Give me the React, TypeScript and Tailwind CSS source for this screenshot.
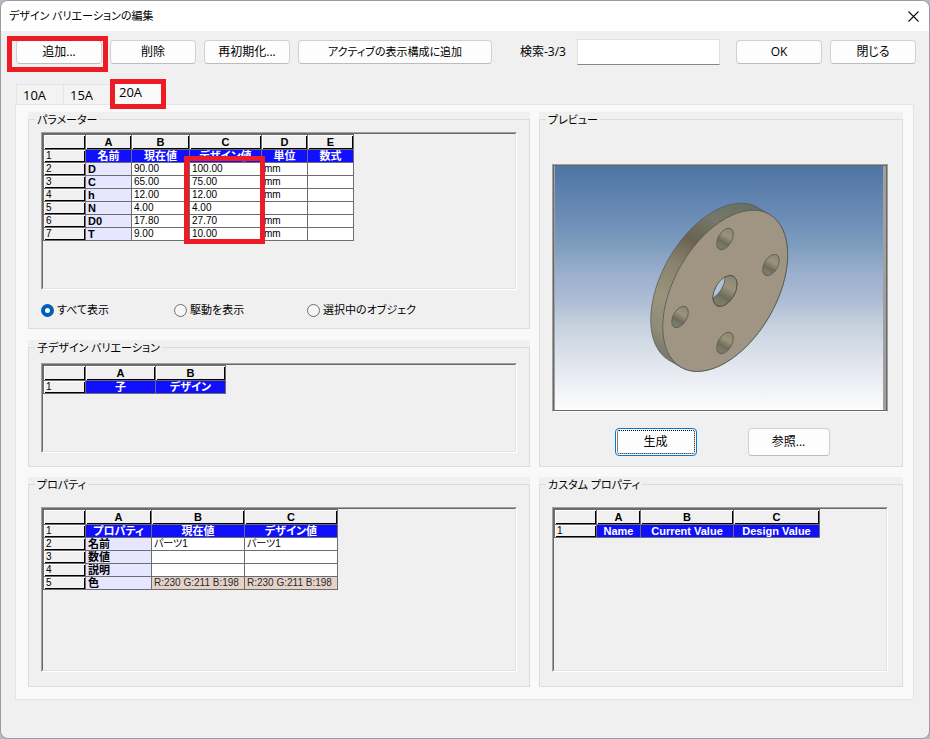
import React, { useState } from 'react'
import clsx from 'clsx'

type CellKind = 'title' | 'name' | 'value' | 'color'

interface SheetProps {
  label: string
  columns: string[]
  titles: string[]
  rows?: string[][]
  valueKinds?: CellKind[]
}

interface GroupProps {
  title: string
  className?: string
  children: React.ReactNode
}

interface PushButtonProps {
  children: React.ReactNode
  className?: string
  isDefault?: boolean
}

const TABS = ['10A', '15A', '20A']

const FILTERS = ['すべて表示', '駆動を表示', '選択中のオブジェク']

const PARAMETERS = [
  ['D', '90.00', '100.00', 'mm', ''],
  ['C', '65.00', '75.00', 'mm', ''],
  ['h', '12.00', '12.00', 'mm', ''],
  ['N', '4.00', '4.00', '', ''],
  ['D0', '17.80', '27.70', 'mm', ''],
  ['T', '9.00', '10.00', 'mm', ''],
]

const PROPERTIES = [
  ['名前', 'パーツ1', 'パーツ1'],
  ['数値', '', ''],
  ['説明', '', ''],
  ['色', 'R:230 G:211 B:198', 'R:230 G:211 B:198'],
]

const BOLT_HOLES = [
  [170, 73],
  [216, 99],
  [125, 151],
  [170, 177],
]

const HEAD_CELL =
  'h-[15px] border-r border-b border-[#6d6d6d] bg-[#f0f0f0] p-0 text-center text-[11px] leading-3 font-bold shadow-[inset_1px_1px_0_#fff,inset_-1px_-1px_0_#000]'
const ROW_HEAD =
  'h-[13px] border-r border-b border-[#6d6d6d] bg-[#f0f0f0] p-0 pl-[2px] text-left text-[10px] leading-3 font-normal shadow-[inset_1px_1px_0_#fff,inset_-1px_-1px_0_#000]'
const CELL = 'h-[13px] overflow-hidden border-r border-b border-[#6d6d6d] p-0 leading-3 whitespace-nowrap'

const PushButton: React.FC<PushButtonProps> = ({ children, className, isDefault = false }) => (
  <button
    type="button"
    className={clsx(
      'shrink-0 rounded border bg-[#fdfdfd] text-center leading-4 whitespace-nowrap',
      isDefault
        ? 'border-[#0078d4] outline-1 -outline-offset-3 outline-black outline-dotted'
        : 'border-[#d0d0d0] border-b-[#bcbcbc]',
      className
    )}
  >
    {children}
  </button>
)

const Group: React.FC<GroupProps> = ({ title, className, children }) => (
  <div className="flex flex-col bg-[#f0f0f0]">
    <fieldset className={clsx('min-w-0 flex-1 border border-[#dcdcdc] pl-3', className)}>
      <legend className="ml-[-6px] h-[15px] px-[2px] text-[11px] leading-[15px]">{title}</legend>
      {children}
    </fieldset>
  </div>
)

// Sunken frame around every grid
const Well: React.FC<{ className?: string; children: React.ReactNode }> = ({ className, children }) => (
  <div className="border border-t-[#a0a0a0] border-r-white border-b-white border-l-[#a0a0a0]">
    <div
      className={clsx(
        'relative border border-t-[#696969] border-r-[#e3e3e3] border-b-[#e3e3e3] border-l-[#696969]',
        className
      )}
    >
      {children}
    </div>
  </div>
)

const Sheet: React.FC<SheetProps> = ({ label, columns, titles, rows = [], valueKinds = [] }) => (
  <table
    aria-label={label}
    className="w-px table-fixed border-separate border-spacing-0 border-t border-l border-[#6d6d6d] font-['Liberation_Sans','Noto_Sans_CJK_JP',sans-serif] text-[10px]"
  >
    <thead>
      <tr>
        <td className={clsx(HEAD_CELL, 'w-[42px]')}></td>
        {columns.map((width, i) => (
          <th key={i} scope="col" className={clsx(HEAD_CELL, width)}>
            {'ABCDE'[i]}
          </th>
        ))}
      </tr>
    </thead>
    <tbody>
      <tr>
        <th scope="row" className={ROW_HEAD}>
          1
        </th>
        {titles.map((title) => (
          <td key={title} className={clsx(CELL, 'bg-[#1010ff] text-center text-[11px] font-bold text-white')}>
            {title}
          </td>
        ))}
      </tr>
      {rows.map((row, r) => (
        <tr key={row[0]}>
          <th scope="row" className={ROW_HEAD}>
            {r + 2}
          </th>
          {row.map((text, c) => (
            <td
              key={c}
              className={clsx(
                CELL,
                'pl-[2px]',
                c === 0 && 'bg-[#e6e6ff] text-[11px] font-bold',
                c > 0 && (valueKinds[r] === 'color' ? 'bg-[#e6d3c6] text-[#1f2d36]' : 'bg-white')
              )}
            >
              {text}
            </td>
          ))}
        </tr>
      ))}
    </tbody>
  </table>
)

const FlangeDrawing: React.FC = () => (
  <svg viewBox="0 0 328 244" className="block h-[244px] w-full" role="img" aria-label="20A">
    <defs>
      <linearGradient id="rim" gradientUnits="userSpaceOnUse" x1="208" y1="45" x2="120" y2="198">
        <stop offset="0" stopColor="#667064" />
        <stop offset="0.18" stopColor="#76786a" />
        <stop offset="0.34" stopColor="#696250" />
        <stop offset="0.5" stopColor="#88816b" />
        <stop offset="0.7" stopColor="#9b947c" />
        <stop offset="0.88" stopColor="#918b77" />
        <stop offset="1" stopColor="#77766a" />
      </linearGradient>
      <linearGradient id="bore" x1="0" y1="0" x2="0" y2="1">
        <stop offset="0" stopColor="#8b8571" />
        <stop offset="0.35" stopColor="#9b947c" />
        <stop offset="0.66" stopColor="#716a57" />
        <stop offset="0.85" stopColor="#7a7d6e" />
        <stop offset="1" stopColor="#6f786b" />
      </linearGradient>
      <clipPath id="bore-front">
        <ellipse cx="170" cy="125" rx="10" ry="17" transform="rotate(30 170 125)" />
      </clipPath>
    </defs>
    <g stroke="#50564f" strokeWidth="0.7">
      <path d="M214.3 48.3l-12-7A51 88.3 30 0 0 114 194.3l12 7A51 88.3 30 0 0 214.3 48.3z" fill="url(#rim)" />
      <ellipse cx="170.2" cy="124.8" rx="51" ry="88.3" transform="rotate(30 170.2 124.8)" fill="#a09483" />
      {BOLT_HOLES.map(([x, y]) => (
        <ellipse
          key={`${x}-${y}`}
          cx={x}
          cy={y}
          rx="6.8"
          ry="11.7"
          transform={`rotate(30 ${x} ${y})`}
          fill="url(#bore)"
        />
      ))}
      <ellipse cx="170" cy="125" rx="10" ry="17" transform="rotate(30 170 125)" fill="url(#bore)" />
      <g clipPath="url(#bore-front)">
        <ellipse cx="158" cy="118" rx="10" ry="17" transform="rotate(30 158 118)" fill="#b3c1d9" />
      </g>
      <ellipse cx="170" cy="125" rx="10" ry="17" transform="rotate(30 170 125)" fill="none" />
    </g>
  </svg>
)

// Red frame that points out a step of the procedure
const Highlight: React.FC<{ className: string }> = ({ className }) => (
  <span
    aria-hidden="true"
    className={clsx('pointer-events-none absolute z-10 border-[5px] border-[#ed1c24]', className)}
  />
)

export default function App() {
  const [activeTab, setActiveTab] = useState('20A')
  const [filter, setFilter] = useState(FILTERS[0])

  return (
    <div className="flex min-h-screen bg-[#b4bac4] font-['Open_Sans','Noto_Sans_CJK_JP',sans-serif] text-xs text-black [font-feature-settings:'palt']">
      <div className="flex flex-1 flex-col overflow-hidden rounded-lg border border-[#999ca2] bg-[#f0f0f0]">
        {/* Title bar */}
        <header className="flex h-[30px] items-center justify-between bg-white pr-[10px] pl-2">
          <h1 className="text-[11px]">デザイン バリエーションの編集</h1>
          <button type="button" aria-label="Close">
            <svg viewBox="0 0 11 11" className="size-[11px]" stroke="#111" strokeWidth="1.1" fill="none">
              <path d="M0.5 0.5l10 10M10.5 0.5l-10 10" />
            </svg>
          </button>
        </header>

        {/* Toolbar */}
        <div className="flex items-center gap-2 pt-2 pr-[13px] pl-[15px]">
          <div className="relative flex">
            <PushButton className="h-6 w-[86px]">追加...</PushButton>
            <Highlight className="-top-1 -right-[6px] -bottom-2 -left-[9px]" />
          </div>
          <PushButton className="h-6 w-[86px]">削除</PushButton>
          <PushButton className="h-6 w-[86px]">再初期化...</PushButton>
          <PushButton className="h-6 w-[194px] text-[11px]">アクティブの表示構成に追加</PushButton>
          <label htmlFor="search" className="ml-5 w-[49px] shrink-0 whitespace-nowrap">
            検索-3/3
          </label>
          <input
            id="search"
            type="text"
            className="h-[26px] min-w-0 flex-1 border border-[#e0e0e0] border-b-[#868686] bg-white px-1"
          />
          <PushButton className="ml-2 h-6 w-[86px]">OK</PushButton>
          <PushButton className="h-6 w-[86px]">閉じる</PushButton>
        </div>

        {/* Size tabs */}
        <div role="tablist" className="flex h-[39px] items-end pl-[15px]">
          {TABS.map((tab) => (
            <button
              key={tab}
              type="button"
              role="tab"
              aria-selected={tab === activeTab}
              onClick={() => setActiveTab(tab)}
              className={clsx(
                'relative text-left text-[13px] leading-4',
                tab === activeTab
                  ? 'h-[25px] w-14 bg-[#f9f9f9] pl-[9px]'
                  : 'h-5 w-[47px] border-t border-l border-[#e5e5e5] bg-[#f3f3f3] pl-[6px]'
              )}
            >
              {tab}
              {tab === '20A' && <Highlight className="top-0 right-0 -bottom-[5px] left-0" />}
            </button>
          ))}
        </div>

        <main className="mr-[15px] mb-[38px] ml-[14px] grid grid-cols-[502fr_364fr] gap-x-[9px] gap-y-[10px] border border-[#e5e5e5] bg-[#f9f9f9] pt-[7px] pr-[10px] pb-3 pl-3">
          <div className="flex flex-col gap-[11px]">
            <Group title="パラメーター" className="pr-3">
              <div className="pt-[5px]">
                <Well className="h-[156px]">
                  <Sheet
                    label="パラメーター"
                    columns={['w-[46px]', 'w-[58px]', 'w-[72px]', 'w-[46px]', 'w-[46px]']}
                    titles={['名前', '現在値', 'デザイン値', '単位', '数式']}
                    rows={PARAMETERS}
                  />
                  <Highlight className="top-[22px] left-[141px] h-[88px] w-[81px]" />
                </Well>
              </div>
              <div className="flex items-center pt-3 pb-[10px]">
                {FILTERS.map((name) => (
                  <label
                    key={name}
                    className="flex min-w-[133px] items-center gap-[3px] text-[11px] leading-4 whitespace-nowrap"
                  >
                    <input
                      type="radio"
                      name="filter"
                      checked={name === filter}
                      onChange={() => setFilter(name)}
                      className="size-[13px] appearance-none rounded-full border border-[#6e6e6e] bg-[#f6f6f6] checked:border-4 checked:border-[#005fb8] checked:bg-white"
                    />
                    {name}
                  </label>
                ))}
              </div>
            </Group>

            <Group title="子デザイン バリエーション" className="pt-2 pr-3 pb-[13px]">
              <Well className="h-[88px]">
                <Sheet
                  label="子デザイン バリエーション"
                  columns={['w-[70px]', 'w-[70px]']}
                  titles={['子', 'デザイン']}
                />
              </Well>
            </Group>
          </div>

          <Group title="プレビュー" className="pr-[14px]">
            <div className="mt-[37px] border border-[#a0a0a0] border-b-white">
              <div className="border border-[#696969] bg-[#a0a0a0] pr-[3px] pl-px">
                <div className="bg-[linear-gradient(#4f75a4,#6a8bb6_20%,#7f9dbe_33%,#9db0cf_45%,#b0bed6_56%,#c5d1de_65%,#dfe4ed_80%,#fdfdfe)]">
                  <FlangeDrawing />
                </div>
              </div>
            </div>
            <div className="flex justify-center gap-[51px] pt-4 pl-1">
              <PushButton isDefault className="h-7 w-[82px]">
                生成
              </PushButton>
              <PushButton className="h-7 w-[82px]">参照...</PushButton>
            </div>
          </Group>

          <Group title="プロパティ" className="pt-[15px] pr-3 pb-[14px]">
            <Well className="h-[163px]">
              <Sheet
                label="プロパティ"
                columns={['w-[66px]', 'w-[93px]', 'w-[93px]']}
                titles={['プロパティ', '現在値', 'デザイン値']}
                rows={PROPERTIES}
                valueKinds={['value', 'value', 'value', 'color']}
              />
            </Well>
          </Group>

          <Group title="カスタム プロパティ" className="pt-[15px] pr-[14px] pb-[14px]">
            <Well className="h-[163px]">
              <Sheet
                label="カスタム プロパティ"
                columns={['w-[44px]', 'w-[93px]', 'w-[86px]']}
                titles={['Name', 'Current Value', 'Design Value']}
              />
            </Well>
          </Group>
        </main>
      </div>
    </div>
  )
}
